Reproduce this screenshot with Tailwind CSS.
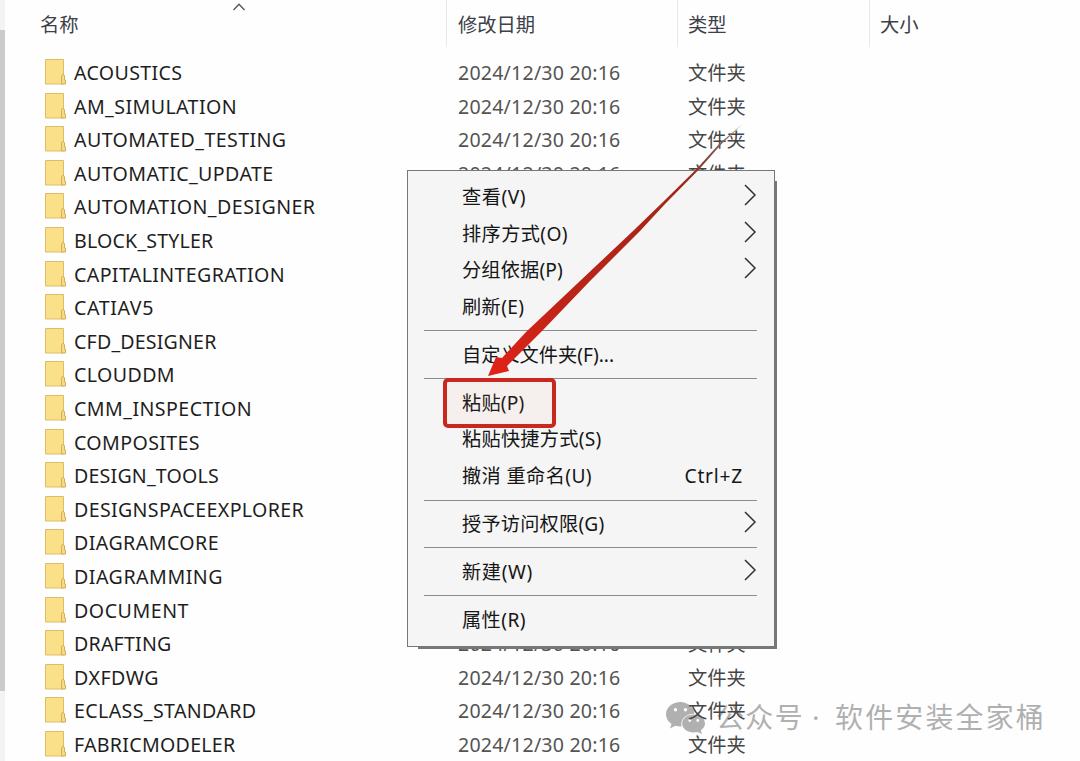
<!DOCTYPE html>
<html lang="zh-CN">
<head>
    <meta charset="UTF-8"/>
    <meta name="viewport" content="width=device-width, initial-scale=1.0"/>
    <title>文件夹</title>
    <script src="https://cdn.jsdelivr.net/npm/@tailwindcss/browser@4"></script>
</head>
<body class="bg-white font-['Noto_Sans','Noto_Sans_CJK_SC',sans-serif] overflow-hidden">

    <div class="relative flex w-[1080px] h-[761px] overflow-hidden bg-[#fefefe]">

        <!-- Scrollbar of the left pane -->
        <div class="w-[5px] h-full bg-[#f3f3f3] pt-[30px] shrink-0">
            <div class="h-[661px] bg-[#cbcbcb]"></div>
        </div>

        <!-- Watermark -->
        <div class="absolute left-[665px] top-[699px] flex items-center text-[#b0b0b0]">
            <svg class="w-[42px] h-[36px]" viewBox="0 0 42 36">
                <path fill="#b0b0b0" d="M15.5 2C7.500 2 1 7.500 1 14.300c0 3.900 2.100 7.300 5.500 9.600L5 28.500l5.300-2.700c1.600.5 3.400.8 5.200.8h1.100c-1.800-7 4.500-13 12.800-12.800C28.600 7 22.500 2 15.500 2Z"/>
                <path fill="#b0b0b0" d="M40 23.600c0-5-5-9-11.400-9S17.200 18.600 17.200 23.600s5.100 9 11.400 9c1.400 0 2.700-.2 3.900-.5l4.500 2-1.100-3.800c2.500-1.600 4.100-4 4.100-6.700Z"/>
                <g fill="#fff"><circle cx="10.500" cy="9.800" r="1.700"/><circle cx="20.500" cy="9.800" r="1.700"/><circle cx="24.800" cy="20.500" r="1.400"/><circle cx="32.800" cy="20.500" r="1.400"/></g>
            </svg>
            <div class="flex ml-[9px] -mt-[2px] text-[28px] leading-[40px] whitespace-nowrap">
                <span class="w-[96px]" data-w="88" data-size="28">公众号</span>
                <span class="w-[23px]">·</span>
                <span data-w="211" data-size="28">软件安装全家桶</span>
            </div>
        </div>

        <!-- File list -->
        <main class="relative flex-1">
            <div class="relative flex h-[47px] text-[19.3px] leading-[50px] text-[#3c4048]">
                <div class="w-[442px] pl-[35px] border-r border-[#e9e9e9]">名称</div>
                <div class="w-[231px] pl-[11px] border-r border-[#e9e9e9]">修改日期</div>
                <div class="w-[192px] pl-[10px] border-r border-[#e9e9e9]">类型</div>
                <div class="pl-[10px]">大小</div>
                <svg class="absolute left-[227px] top-[2px] w-[14px] h-[9px]" viewBox="0 0 14 9" fill="none" stroke="#555" stroke-width="1.3"><path d="M1.5 8 7 2.2 12.5 8"/></svg>
            </div>
            <div id="rows" class="pt-[8.8px]"></div>
        </main>

        <!-- Context menu -->
        <div class="absolute left-[418px] top-[181px] w-[359px] h-[468px] bg-[#777] blur-[0.5px]"></div>
        <div id="menu" class="absolute left-[407px] top-[170px] w-[368px] h-[477px] pt-[7.6px] bg-[#f5f5f5] border border-[#777] text-[19.2px] text-[#161616]"></div>

        <!-- Highlight and pointer -->
        <div class="absolute left-[443px] top-[378px] w-[113px] h-[50px] border-4 border-[#c9281f] rounded-[5px] bg-[#ff8060]/5"></div>
        <svg class="absolute left-0 top-0 w-[1080px] h-[761px]" viewBox="0 0 1080 761">
            <defs>
                <linearGradient id="arrow" gradientUnits="userSpaceOnUse" x1="742" y1="125" x2="488" y2="376">
                    <stop offset="0" stop-color="#8d8580"/>
                    <stop offset=".13" stop-color="#81453b"/>
                    <stop offset=".24" stop-color="#a12618"/>
                    <stop offset=".7" stop-color="#bd2416"/>
                    <stop offset="1" stop-color="#e32218"/>
                </linearGradient>
            </defs>
            <path fill="url(#arrow)" d="M742 124.500 720 143 697 168.500 663 202 633 231 580 281 526 332 502 358 496 357 488 376 509 371 507 366 543 330 590 281 640 231 665 204 698.500 170 721 144.500Z"/>
        </svg>
    </div>

    <script>
        // name and the width its label takes
        const folders = [
            ["ACOUSTICS", 108.5], ["AM_SIMULATION", 163], ["AUTOMATED_TESTING", 212.5],
            ["AUTOMATIC_UPDATE", 199.5], ["AUTOMATION_DESIGNER", 241.5], ["BLOCK_STYLER", 139.5],
            ["CAPITALINTEGRATION", 211], ["CATIAV5", 80], ["CFD_DESIGNER", 142.5],
            ["CLOUDDM", 101], ["CMM_INSPECTION", 178], ["COMPOSITES", 126],
            ["DESIGN_TOOLS", 145], ["DESIGNSPACEEXPLORER", 230], ["DIAGRAMCORE", 145],
            ["DIAGRAMMING", 149], ["DOCUMENT", 115], ["DRAFTING", 97.5],
            ["DXFDWG", 85], ["ECLASS_STANDARD", 182.5], ["FABRICMODELER", 161.5]
        ];

        document.getElementById("rows").innerHTML = folders.map(([name, width]) => `
            <div class="flex items-center h-[33.6px] leading-[33px] whitespace-nowrap">
                <div class="flex items-center w-[453px] pl-[39px]">
                    <svg class="w-[23px] h-[27px] mr-[7px] -mt-[2px]" viewBox="0 0 23 27">
                        <path d="M1.500 1.500h18v24.500h-18Z" fill="#fbe08a" stroke="#dfbd68"/>
                        <path d="M17.500 26V18q1.500-3.500 3 0v4h1v4Z" fill="#f9db7f" stroke="#d6ae57"/>
                    </svg>
                    <span class="text-[19.6px] text-[#1e1e1e]" data-w="${width}" data-size="19.6">${name}</span>
                </div>
                <div class="w-[230px] text-[19.6px] text-[#545454]"><span data-w="162.5" data-size="19.6">2024/12/30 20:16</span></div>
                <div class="text-[19.3px] text-[#454545]">文件夹</div>
            </div>`).join("");

        // label, label width, what stands on the right; null is a separator
        const items = [
            ["查看(V)", 64, "sub"], ["排序方式(O)", 106, "sub"], ["分组依据(P)", 101, "sub"], ["刷新(E)", 62.5],
            null, ["自定义文件夹(F)...", 152.5],
            null, ["粘贴(P)", 62.5], ["粘贴快捷方式(S)", 139.5], ["撤消 重命名(U)", 130, "Ctrl+Z"],
            null, ["授予访问权限(G)", 142.5, "sub"],
            null, ["新建(W)", 71, "sub"],
            null, ["属性(R)", 64]
        ];
        const chevron = `<svg class="w-[14px] h-[24px] mr-[17px] -mt-[4px]" viewBox="0 0 14 24" fill="none" stroke="#333" stroke-width="1.5"><path d="M2 2 12 12 2 22"/></svg>`;

        document.getElementById("menu").innerHTML = items.map(item => {
            if (!item) return `<div class="h-[11.2px] flex items-center ml-[16px] mr-[17px]"><hr class="w-full border-t border-[#8c8c8c]"></div>`;
            const [label, width, right] = item;
            const end = right === "sub" ? chevron : right ? `<span class="mr-[31px]" data-w="58.5" data-size="19.2">${right}</span>` : "";
            return `<div class="flex items-center justify-between h-[36.7px] pl-[54px] leading-[36px] whitespace-nowrap"><span data-w="${width}" data-size="19.2">${label}</span>${end}</div>`;
        }).join("");

        // spread the letters so that each label fills its width
        const ctx = document.createElement("canvas").getContext("2d");
        document.querySelectorAll("[data-w]").forEach(el => {
            ctx.font = `${el.dataset.size}px "Noto Sans", "Noto Sans CJK SC", sans-serif`;
            const natural = ctx.measureText(el.textContent).width;
            el.style.letterSpacing = (el.dataset.w - natural) / el.textContent.length + "px";
        });
    </script>

</body>
</html>
